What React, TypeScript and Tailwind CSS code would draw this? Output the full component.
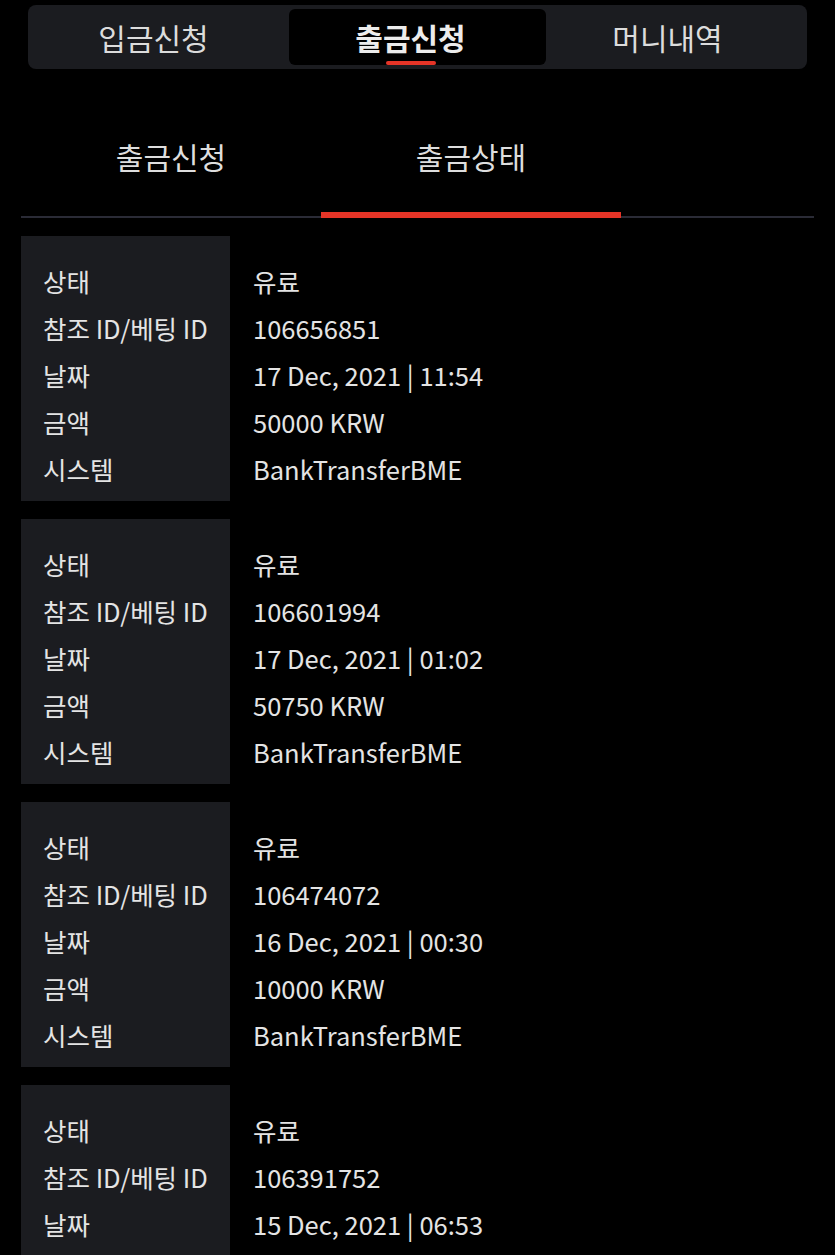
import React, { useState } from 'react'

interface Record {
  status: string
  refId: string
  date: string
  amount: string
  system: string
}

const records: Record[] = [
  { status: '유료', refId: '106656851', date: '17 Dec, 2021 | 11:54', amount: '50000 KRW', system: 'BankTransferBME' },
  { status: '유료', refId: '106601994', date: '17 Dec, 2021 | 01:02', amount: '50750 KRW', system: 'BankTransferBME' },
  { status: '유료', refId: '106474072', date: '16 Dec, 2021 | 00:30', amount: '10000 KRW', system: 'BankTransferBME' },
  { status: '유료', refId: '106391752', date: '15 Dec, 2021 | 06:53', amount: '10000 KRW', system: 'BankTransferBME' }
]

const labels = ['상태', '참조 ID/베팅 ID', '날짜', '금액', '시스템']

const topTabs = ['입금신청', '출금신청', '머니내역']
const subTabs = ['출금신청', '출금상태']

export default function App() {
  const [topTab, setTopTab] = useState(1)
  const [subTab, setSubTab] = useState(1)

  return (
    <div
      className="min-h-[1255px] bg-black text-[#e4e4e4]"
      style={{ fontFamily: '"Noto Sans CJK KR", "Noto Sans", sans-serif' }}
    >
      {/* 상단 탭 */}
      <div className="px-[28px] pt-[5px]">
        <div className="flex h-[64px] rounded-[8px] bg-[#1b1c20] p-[4px]">
          {topTabs.map((tab, i) => (
            <button
              key={tab}
              onClick={() => setTopTab(i)}
              className={`relative flex flex-1 items-center justify-center rounded-[6px] pr-[14px] text-[30px] ${
                topTab === i ? 'bg-black font-bold text-[#ececec]' : 'text-[#dcdcdc]'
              }`}
            >
              {tab}
              {topTab === i && (
                <span className="absolute bottom-0 left-1/2 h-[4px] w-[50px] -translate-x-[64%] rounded-full bg-[#e53427]" />
              )}
            </button>
          ))}
        </div>
      </div>

      {/* 서브 탭 */}
      <div className="mx-[21px] mt-[45px] flex border-b-2 border-[#2a2b36]">
        {subTabs.map((tab, i) => (
          <button
            key={tab}
            onClick={() => setSubTab(i)}
            className={`relative -mb-[2px] flex h-[104px] w-[300px] justify-center pt-[20px] text-[30px] text-[#dedede] ${
              subTab === i ? 'border-b-[6px] border-[#e53427]' : ''
            }`}
          >
            {tab}
          </button>
        ))}
      </div>

      {/* 출금 내역 */}
      <div className="mx-[21px] mt-[18px] flex flex-col gap-[18px]">
        {records.map((r) => {
          const values = [r.status, r.refId, r.date, r.amount, r.system]
          return (
            <div key={r.refId} className="flex">
              <div className="w-[209px] shrink-0 bg-[#1b1c20] pl-[22px] pt-[21px] pb-[9px]">
                {labels.map((l) => (
                  <div key={l} className="h-[47px] text-[25.5px] leading-[47px] whitespace-nowrap">
                    {l}
                  </div>
                ))}
              </div>
              <div className="pl-[23px] pt-[21px] pb-[9px]">
                {values.map((v, i) => (
                  <div key={i} className="h-[47px] text-[25.5px] leading-[47px] whitespace-nowrap">
                    {v}
                  </div>
                ))}
              </div>
            </div>
          )
        })}
      </div>
    </div>
  )
}
